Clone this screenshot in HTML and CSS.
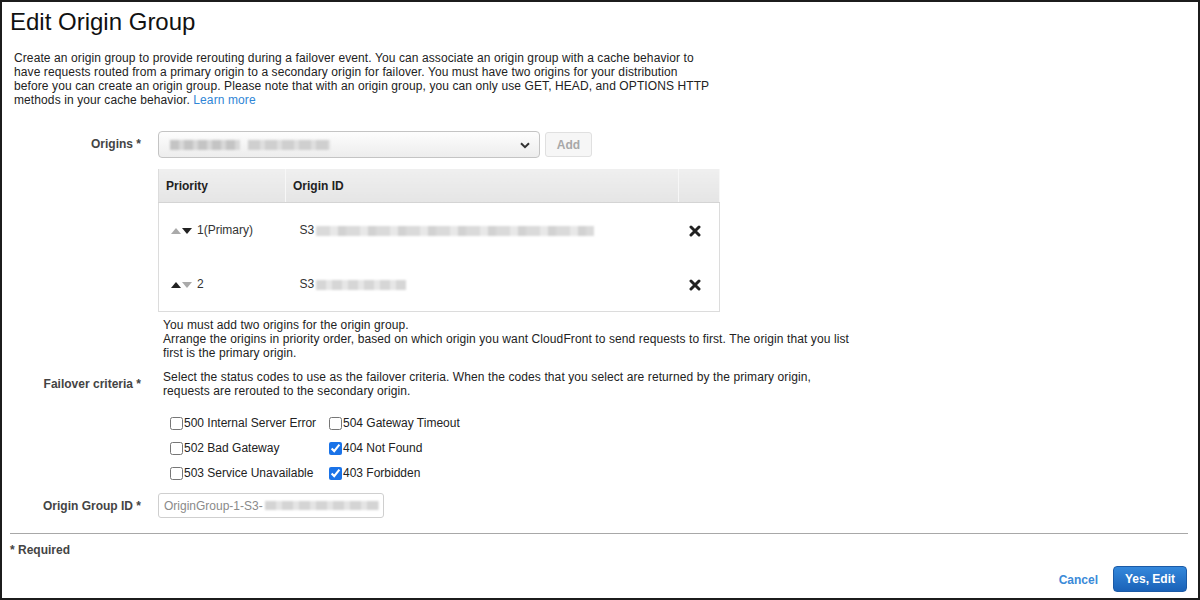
FILE: index.html
```html
<!DOCTYPE html>
<html lang="en">
<head>
    <meta charset="UTF-8">
    <title>Edit Origin Group</title>
    <link rel="stylesheet" href="styles.css">
</head>
<body>
<div class="page">
    <h1>Edit Origin Group</h1>

    <p class="intro">
        Create an origin group to provide rerouting during a failover event. You can associate an origin group with a cache behavior to<br>
        have requests routed from a primary origin to a secondary origin for failover. You must have two origins for your distribution<br>
        before you can create an origin group. Please note that with an origin group, you can only use GET, HEAD, and OPTIONS HTTP<br>
        methods in your cache behavior. <a href="#" class="link">Learn more</a>
    </p>

    <div class="form">
        <!-- origins -->
        <div class="row row-origins">
            <label class="label">Origins *</label>
            <div class="field">
                <div class="select-line">
                    <div class="select">
                        <span class="blur blur-a"></span><span class="blur blur-b"></span>
                        <svg class="chev" width="10" height="7" viewBox="0 0 10 7"><path d="M1 1.2l4 4 4-4" fill="none" stroke="#333" stroke-width="2"/></svg>
                    </div>
                    <button class="btn-add" disabled>Add</button>
                </div>

                <table class="origins">
                    <thead>
                        <tr>
                            <th class="c-prio">Priority</th>
                            <th class="c-id">Origin ID</th>
                            <th class="c-x"></th>
                        </tr>
                    </thead>
                    <tbody>
                        <tr>
                            <td class="c-prio"><span class="arr up off"></span><span class="arr down"></span>1(Primary)</td>
                            <td class="c-id">S3<span class="blur blur-long"></span></td>
                            <td class="c-x"><svg width="12" height="12" viewBox="0 0 12 12"><path d="M2 2l8 8M10 2l-8 8" stroke="#222" stroke-width="3" stroke-linecap="round"/></svg></td>
                        </tr>
                        <tr>
                            <td class="c-prio"><span class="arr up"></span><span class="arr down off"></span>2</td>
                            <td class="c-id">S3<span class="blur blur-short"></span></td>
                            <td class="c-x"><svg width="12" height="12" viewBox="0 0 12 12"><path d="M2 2l8 8M10 2l-8 8" stroke="#222" stroke-width="3" stroke-linecap="round"/></svg></td>
                        </tr>
                    </tbody>
                </table>

                <div class="help">
                    You must add two origins for the origin group.<br>
                    Arrange the origins in priority order, based on which origin you want CloudFront to send requests to first. The origin that you list<br>
                    first is the primary origin.
                </div>
            </div>
        </div>

        <!-- failover -->
        <div class="row row-failover">
            <label class="label">Failover criteria *</label>
            <div class="field help">
                Select the status codes to use as the failover criteria. When the codes that you select are returned by the primary origin,<br>
                requests are rerouted to the secondary origin.
            </div>
        </div>

        <div class="codes">
            <label class="code"><input type="checkbox"> 500 Internal Server Error</label>
            <label class="code"><input type="checkbox"> 504 Gateway Timeout</label>
            <label class="code"><input type="checkbox"> 502 Bad Gateway</label>
            <label class="code"><input type="checkbox" checked> 404 Not Found</label>
            <label class="code"><input type="checkbox"> 503 Service Unavailable</label>
            <label class="code"><input type="checkbox" checked> 403 Forbidden</label>
        </div>

        <!-- group id -->
        <div class="row row-gid">
            <label class="label">Origin Group ID *</label>
            <div class="field">
                <div class="text-input">OriginGroup-1-S3-<span class="blur blur-id"></span></div>
            </div>
        </div>
    </div>

    <div class="footer">
        <div class="required">* Required</div>
        <div class="actions">
            <a href="#" class="cancel">Cancel</a>
            <button class="btn-primary">Yes, Edit</button>
        </div>
    </div>
</div>
</body>
</html>
```

FILE: styles.css
```css
/* General */
body {
    margin: 0;
    background: white;
}

.page {
    width: 1200px;
    height: 600px;
    box-sizing: border-box;
    border: 2px solid #1c1c1c;
    font-family: "Liberation Sans", Arial, sans-serif;
    font-size: 12px;
    color: #222;
    display: flex;
    flex-direction: column;
}

h1 {
    margin: 0;
    padding: 6px 0 0 8px;
    font-size: 24px;
    font-weight: normal;
    line-height: 28px;
    color: #111;
}

.intro {
    margin: 15px 0 0 12px;
    line-height: 14px;
    letter-spacing: 0.1px;
}

.link {
    color: #2f86d6;
    text-decoration: none;
}

/* Form rows */
.form {
    margin-top: 24px;
}

.row {
    display: grid;
    grid-template-columns: 139px 1fr;
    column-gap: 17px;
}

.label {
    text-align: right;
    font-weight: bold;
    color: #444;
}

.row-origins .label {
    line-height: 27px;
}

.select-line {
    display: flex;
    align-items: center;
    gap: 5px;
}

.select {
    position: relative;
    box-sizing: border-box;
    width: 382px;
    height: 27px;
    border: 1px solid #c4c4c4;
    border-radius: 4px;
    background: linear-gradient(#fdfdfd, #ededed);
    display: flex;
    align-items: center;
    padding-left: 11px;
    gap: 8px;
}

.chev {
    position: absolute;
    right: 9px;
    top: 10px;
}

.btn-add {
    width: 47px;
    height: 25px;
    border: 1px solid #e0e0e0;
    border-radius: 3px;
    background: #f6f6f6;
    color: #a8a8a8;
    font-family: inherit;
    font-size: 12px;
    font-weight: bold;
}

/* blurred values */
.blur {
    display: inline-block;
    height: 10px;
    filter: blur(1px);
    vertical-align: middle;
}

.blur-a {
    width: 70px;
    background: repeating-linear-gradient(90deg, #c4c4c4 0 9px, #d8d8d8 9px 14px);
}

.blur-b {
    width: 82px;
    background: repeating-linear-gradient(90deg, #cfcfcf 0 12px, #dedede 12px 17px);
}

.blur-long {
    width: 278px;
    margin-left: 2px;
    background: repeating-linear-gradient(90deg, #dadada 0 14px, #e8e8e8 14px 22px, #d2d2d2 22px 30px);
}

.blur-short {
    width: 90px;
    margin-left: 2px;
    background: repeating-linear-gradient(90deg, #d6d6d6 0 10px, #e6e6e6 10px 16px);
}

.blur-id {
    width: 114px;
    height: 9px;
    margin-left: 2px;
    background: repeating-linear-gradient(90deg, #d4d4d4 0 11px, #e4e4e4 11px 17px);
}

/* Origins table */
.origins {
    margin-top: 11px;
    width: 562px;
    table-layout: fixed;
    border-collapse: collapse;
    border: 1px solid #dcdcdc;
    border-top: none;
}

.origins th {
    height: 33px;
    padding: 0 7px;
    text-align: left;
    font-size: 12px;
    background: linear-gradient(#efefef, #e5e5e5);
    border-bottom: 1px solid #d4d4d4;
    border-right: 1px solid #f7f7f7;
}

.origins th.c-prio {
    width: 112px;
}

.origins th.c-x {
    width: 26px;
}

.origins td {
    height: 54px;
    padding: 0;
}

.origins td.c-prio {
    padding-left: 12px;
    color: #333;
}

.origins td.c-id {
    padding-left: 14px;
    color: #333;
}

.origins td.c-x {
    padding-left: 10px;
}

.origins td.c-x svg {
    vertical-align: middle;
}

.arr {
    display: inline-block;
    width: 0;
    height: 0;
    border-left: 5px solid transparent;
    border-right: 5px solid transparent;
    margin-right: 1px;
    vertical-align: middle;
}

.arr.up {
    border-bottom: 6px solid #222;
}

.arr.down {
    border-top: 6px solid #222;
    margin-right: 5px;
}

.arr.up.off {
    border-bottom-color: #aaa;
}

.arr.down.off {
    border-top-color: #aaa;
}

.help {
    line-height: 14px;
    color: #222;
    letter-spacing: 0.1px;
}

.row-origins .help {
    margin: 6px 0 0 5px;
}

.row-failover {
    margin-top: 10px;
    align-items: center;
}

.row-failover .help {
    padding-left: 5px;
}

/* Status codes */
.codes {
    margin: 17px 0 0 168px;
    display: grid;
    grid-template-columns: 159px 160px;
    row-gap: 9px;
}

.code {
    display: flex;
    align-items: center;
    gap: 1px;
    height: 16px;
    color: #222;
}

.code input {
    margin: 0;
    width: 13px;
    height: 13px;
    accent-color: #1a73e8;
}

.row-gid {
    margin-top: 12px;
    align-items: center;
}

.text-input {
    width: 219px;
    height: 23px;
    border: 1px solid #cfcfcf;
    border-radius: 3px;
    padding-left: 5px;
    display: flex;
    align-items: center;
    color: #8a8a8a;
}

/* Footer */
.footer {
    margin: 15px 10px 0 8px;
    border-top: 1px solid #a8a8a8;
    flex: 1;
    display: flex;
    flex-direction: column;
}

.required {
    margin-top: 9px;
    font-weight: bold;
    color: #444;
}

.actions {
    margin-top: 9px;
    display: flex;
    justify-content: flex-end;
    align-items: center;
    gap: 15px;
    padding-right: 1px;
}

.cancel {
    color: #3a8ad8;
    font-weight: bold;
    text-decoration: none;
    margin-top: 2px;
}

.btn-primary {
    width: 74px;
    height: 26px;
    border: 1px solid #1b5aa6;
    border-radius: 4px;
    background: linear-gradient(#3488dc, #1a62b8);
    color: white;
    font-family: inherit;
    font-size: 12px;
    font-weight: bold;
}
```
